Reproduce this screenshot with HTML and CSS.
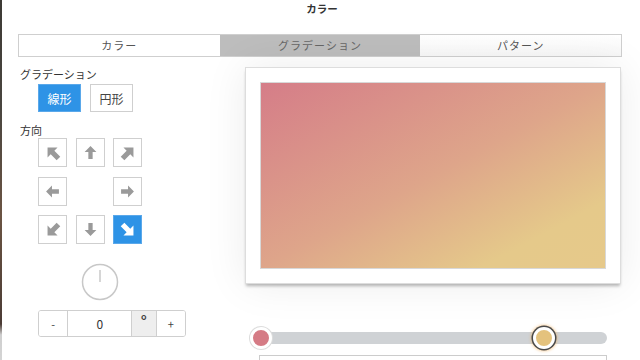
FILE: index.html
```html
<!DOCTYPE html>
<html lang="ja">
<head>
    <meta charset="UTF-8">
    <title>カラー</title>
    <link rel="stylesheet" href="styles.css">
</head>
<body>
    <div class="edge"></div>
    <div class="main">
        <header class="title">カラー</header>
        <nav class="tabs">
            <div class="tab">カラー</div>
            <div class="tab active">グラデーション</div>
            <div class="tab">パターン</div>
        </nav>
        <div class="content">
            <div class="side">
                <div class="label">グラデーション</div>
                <div class="kinds">
                    <button class="kind selected">線形</button>
                    <button class="kind">円形</button>
                </div>
                <div class="label dir-label">方向</div>
                <div class="dirs">
                    <button class="dir diag"><svg viewBox="0 0 14 14" style="transform:rotate(-45deg)"><path d="M7 1 L12.5 6.5 L9 6.5 L9 13 L5 13 L5 6.5 L1.5 6.5 Z"/></svg></button>
                    <button class="dir"><svg viewBox="0 0 14 14"><path d="M7 1 L12.5 6.5 L9 6.5 L9 13 L5 13 L5 6.5 L1.5 6.5 Z"/></svg></button>
                    <button class="dir diag"><svg viewBox="0 0 14 14" style="transform:rotate(45deg)"><path d="M7 1 L12.5 6.5 L9 6.5 L9 13 L5 13 L5 6.5 L1.5 6.5 Z"/></svg></button>
                    <button class="dir"><svg viewBox="0 0 14 14" style="transform:rotate(-90deg)"><path d="M7 1 L12.5 6.5 L9 6.5 L9 13 L5 13 L5 6.5 L1.5 6.5 Z"/></svg></button>
                    <span class="dir-gap"></span>
                    <button class="dir"><svg viewBox="0 0 14 14" style="transform:rotate(90deg)"><path d="M7 1 L12.5 6.5 L9 6.5 L9 13 L5 13 L5 6.5 L1.5 6.5 Z"/></svg></button>
                    <button class="dir diag"><svg viewBox="0 0 14 14" style="transform:rotate(-135deg)"><path d="M7 1 L12.5 6.5 L9 6.5 L9 13 L5 13 L5 6.5 L1.5 6.5 Z"/></svg></button>
                    <button class="dir"><svg viewBox="0 0 14 14" style="transform:rotate(180deg)"><path d="M7 1 L12.5 6.5 L9 6.5 L9 13 L5 13 L5 6.5 L1.5 6.5 Z"/></svg></button>
                    <button class="dir diag selected"><svg viewBox="0 0 14 14" style="transform:rotate(135deg)"><path d="M7 1 L12.5 6.5 L9 6.5 L9 13 L5 13 L5 6.5 L1.5 6.5 Z"/></svg></button>
                </div>
                <div class="dial">
                    <svg viewBox="0 0 38 38">
                        <circle cx="19" cy="19" r="17.5"/>
                        <line x1="19" y1="7" x2="19" y2="19"/>
                    </svg>
                </div>
                <div class="angle">
                    <button class="step">-</button>
                    <div class="value">0</div>
                    <div class="unit">°</div>
                    <button class="step">+</button>
                </div>
            </div>
            <div class="preview-col">
                <div class="card">
                    <div class="swatch"></div>
                </div>
                <div class="slider">
                    <div class="track"></div>
                    <span class="stop first" style="left:0"></span>
                    <span class="stop last" style="left:81.5%"></span>
                </div>
                <div class="stop-field"></div>
            </div>
        </div>
    </div>
</body>
</html>
```

FILE: styles.css
```css
:root {
    --blue: #2e93e6;
    --line: #cfcfcf;
    --text: #333;
    --icon: #9a9a9a;
}
body {
    margin: 0;
    background: #fff;
    color: var(--text);
    font-family: "Noto Sans CJK JP", "Noto Sans", sans-serif;
    display: flex;
    height: 360px;
    overflow: hidden;
}
.edge {
    width: 2px;
    height: 100%;
    flex: none;
    background: linear-gradient(#3d3a35 0%, #4a4640 30%, #6b5443 60%, #4b3c35 90%, #cfcfcf 93%, #d4d4d4 100%);
}
.main {
    flex: 1;
    display: flex;
    flex-direction: column;
}
.title {
    text-align: center;
    font-size: 10.5px;
    font-weight: bold;
    line-height: 18px;
    height: 18px;
    padding-left: 2px;
}
.tabs {
    display: flex;
    margin: 16px 18px 0 16px;
    border: 1px solid var(--line);
    height: 21px;
}
.tab {
    flex: 1;
    text-align: center;
    font-size: 11px;
    line-height: 21px;
    color: #555;
    letter-spacing: 1px;
    background: #fff;
}
.tab:last-child {
    background: linear-gradient(#fff, #f7f7f7);
}
.tab.active {
    background: #bdbdbd;
    color: #666;
}
.content {
    display: flex;
    padding-left: 18px;
}
.side {
    width: 225px;
    flex: none;
    display: flex;
    flex-direction: column;
}
.label {
    font-size: 11px;
    line-height: 14px;
    margin-top: 10px;
}
.dir-label {
    margin-top: 11px;
}
.kinds {
    display: flex;
    gap: 9px;
    margin: 3px 0 0 18px;
}
button {
    font-family: inherit;
    cursor: pointer;
}
.kind {
    width: 43px;
    height: 28px;
    padding: 0;
    border: 1px solid var(--line);
    background: #fff;
    font-size: 12px;
    color: #444;
}
.kind.selected {
    background: var(--blue);
    border-color: #5aa8ea;
    color: #fff;
}
.dirs {
    display: grid;
    grid-template-columns: repeat(3, 29px);
    grid-auto-rows: 29px;
    column-gap: 8.5px;
    row-gap: 9.5px;
    margin: 1px 0 0 18px;
}
.dir {
    padding: 0;
    border: 1px solid var(--line);
    background: #fff;
    display: flex;
    align-items: center;
    justify-content: center;
}
.dir svg {
    width: 15px;
    height: 15px;
    fill: var(--icon);
}
.dir.diag svg {
    width: 18px;
    height: 18px;
}
.dir.selected {
    background: var(--blue);
    border-color: #5aa8ea;
}
.dir.selected svg {
    fill: #fff;
}
.dial {
    margin: 19px 0 0 61px;
    width: 38px;
    height: 38px;
}
.dial svg {
    width: 38px;
    height: 38px;
    fill: none;
    stroke: #c8c8c8;
    stroke-width: 1.5;
}
.dial line {
    stroke: #bbb;
    stroke-width: 1.2;
}
.angle {
    display: flex;
    margin: 9px 0 0 18px;
    width: 148px;
    height: 27px;
    border: 1px solid var(--line);
    border-radius: 3px;
    box-sizing: border-box;
    overflow: hidden;
}
.step {
    width: 29px;
    padding: 0;
    border: none;
    background: #fff;
    font-size: 11px;
    color: #444;
}
.value, .unit {
    border-left: 1px solid var(--line);
    display: flex;
    align-items: center;
    justify-content: center;
    font-size: 12px;
}
.value {
    width: 64px;
}
.unit {
    width: 26px;
    background: #eee;
    font-size: 15px;
    font-weight: bold;
    color: #444;
    padding-bottom: 6px;
    box-sizing: border-box;
    border-right: 1px solid var(--line);
}
.preview-col {
    width: 376px;
    flex: none;
    display: flex;
    flex-direction: column;
}
.card {
    margin-top: 10px;
    height: 217px;
    box-sizing: border-box;
    padding: 14px;
    background: #fff;
    border: 1px solid #ddd;
    box-shadow: 0 3px 3px -1px rgba(0, 0, 0, 0.28), 0 0 40px rgba(0, 0, 0, 0.08);
}
.swatch {
    height: 100%;
    border: 1px solid #d8d8d8;
    box-sizing: border-box;
    background: linear-gradient(to bottom right, #d57d88, #dea58a 50%, #e5c98a 82%, #e6c98a);
}
.slider {
    position: relative;
    margin: 43px 14px 0 15px;
    height: 22px;
}
.track {
    position: absolute;
    left: 2px;
    right: 0;
    top: 5px;
    height: 12px;
    border-radius: 6px;
    background: #cfd2d5;
}
.stop {
    position: absolute;
    top: 0;
    width: 22px;
    height: 22px;
    box-sizing: border-box;
    border-radius: 50%;
    margin-left: -10px;
    border: 3px solid #fff;
}
.stop.first {
    background: #d57b85;
    box-shadow: 0 0 0 1px #ddd;
}
.stop.last {
    background: #e4c27d;
    box-shadow: 0 0 0 1.5px #4a4a4a, 0 0 3px 2px rgba(240, 170, 80, 0.6);
}
.stop-field {
    margin: 6px 14px 0 14px;
    height: 20px;
    border: 1px solid #ccc;
}
```
